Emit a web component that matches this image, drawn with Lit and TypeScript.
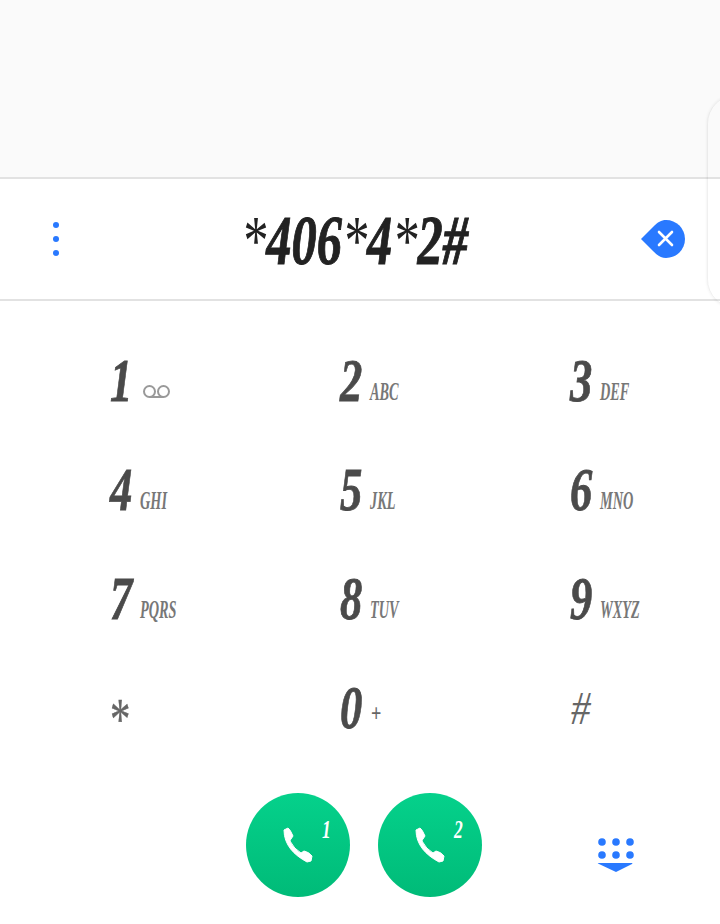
import { LitElement, html, css, svg } from "lit";
import { customElement } from "lit/decorators.js";

const KEYS: [string, string][] = [
  ["1", "vm"], ["2", "ABC"], ["3", "DEF"],
  ["4", "GHI"], ["5", "JKL"], ["6", "MNO"],
  ["7", "PQRS"], ["8", "TUV"], ["9", "WXYZ"],
  ["*", ""], ["0", "+"], ["#", ""],
];

const handset = svg`<path d="M4 5 L8 3 Q10 4 13 11 L11 14 Q10 15 10 16 Q14 24 21 28 L24 26 Q29 27 32 31 L31 36 L27 37 C14 30 4 20 4 5 Z" fill="#fff" stroke="#fff" stroke-width="1" stroke-linejoin="round"/>`;

@customElement("app-root")
export class AppRoot extends LitElement {
  static styles = css`
    :host { display: block; width: 720px; height: 924px; background: #fff; position: relative; overflow: hidden; font-family: "Liberation Serif", serif; }
    .top { height: 177px; background: #fafafa; }
    .display { height: 120px; border-top: 2px solid #e2e2e2; border-bottom: 2px solid #e2e2e2; display: flex; align-items: center; justify-content: space-between; padding: 0 35px 0 53px; background: #fff; }
    .dots { display: flex; flex-direction: column; gap: 8px; }
    .dots i { width: 6px; height: 6px; border-radius: 50%; background: #2979ff; display: block; }
    .number { font-size: 70px; font-weight: 700; font-style: italic; color: #222; -webkit-text-stroke: 1px #222; transform: scaleX(0.72); line-height: 1; white-space: nowrap; position: relative; left: 5px; top: 2px; }
    .number .s { -webkit-text-stroke: 0; font-weight: 400; }
    .del { width: 46px; height: 40px; display: block; }
    .handle { position: absolute; left: 707px; top: 94px; width: 60px; height: 215px; border: 1px solid rgba(0,0,0,.06); border-radius: 30px; box-sizing: border-box; box-shadow: 0 0 3px rgba(0,0,0,.08); }
    .keys { display: grid; grid-template-columns: repeat(3, 230px); grid-auto-rows: 109px; padding: 49px 0 0 110px; }
    .key { display: flex; align-items: baseline; height: 60px; }
    .digit { width: 30px; font-size: 62px; font-weight: 700; font-style: italic; color: #4a4a4a; -webkit-text-stroke: 0.8px #4a4a4a; line-height: 60px; display: inline-block; transform: scaleX(0.72); transform-origin: left; }
    .letters { font-size: 26px; font-style: italic; font-weight: 700; color: #777; display: inline-block; transform: translateY(-1px) scaleX(0.55); transform-origin: left; white-space: nowrap; }
    .plus { font-size: 26px; font-weight: 700; color: #666; display: inline-block; transform: translate(1px, -6px) scaleX(0.7); transform-origin: left; }
    .vm { width: 30px; height: 16px; display: block; align-self: flex-end; margin: 0 0 10px 2px; }
    .star { font-size: 60px; color: #666; font-weight: 400; font-style: normal; -webkit-text-stroke: 0.4px #666; transform: translate(0, 12px) scaleX(0.68); }
    .hash { font-size: 46px; color: #666; font-weight: 400; -webkit-text-stroke: 0; transform: translate(1px, 2px) scaleX(0.85); }
    .actions { display: flex; padding: 0 0 0 246px; gap: 28px; margin-top: 7px; align-items: center; }
    .call { width: 104px; height: 104px; border-radius: 50%; background: linear-gradient(#05d18b, #00bb78); position: relative; display: flex; align-items: center; justify-content: center; }
    .call svg { width: 36px; height: 40px; }
    .sim { position: absolute; left: 74px; top: 24px; color: #fff; font-size: 25px; font-weight: 700; font-style: italic; transform: scaleX(0.7); line-height: 1; }
    .pad { width: 40px; height: 38px; margin-left: 86px; margin-top: 22px; }
  `;

  private key(d: string, l: string) {
    if (d === "*" || d === "#") {
      return html`<div class="key"><span class="digit ${d === "*" ? "star" : "hash"}">${d}</span></div>`;
    }
    return html`<div class="key">
      <span class="digit">${d}</span>
      ${l === "vm"
        ? html`<svg class="vm" viewBox="0 0 30 16"><circle cx="7.5" cy="7.5" r="5.5" fill="none" stroke="#999" stroke-width="2"/><circle cx="21.5" cy="7.5" r="5.5" fill="none" stroke="#999" stroke-width="2"/><path d="M7.5 13h14" stroke="#999" stroke-width="2"/></svg>`
        : l === "+"
        ? html`<span class="plus">+</span>`
        : html`<span class="letters">${l}</span>`}
    </div>`;
  }

  render() {
    return html`
      <div class="top"></div>
      <div class="display">
        <div class="dots"><i></i><i></i><i></i></div>
        <div class="number"><span class="s">*</span>406<span class="s">*</span>4<span class="s">*</span>2#</div>
        <svg class="del" viewBox="0 0 46 40"><path d="M2 20 L14 8 C19 3 22 1 27 1 A19 19 0 0 1 27 39 C22 39 19 37 14 32 Z" fill="#2979ff"/><path d="M20 13 L33 26 M33 13 L20 26" stroke="#fff" stroke-width="2.6" stroke-linecap="round"/></svg>
      </div>
      <div class="handle"></div>
      <div class="keys">${KEYS.map(([d, l]) => this.key(d, l))}</div>
      <div class="actions">
        <div class="call"><svg viewBox="0 0 36 40">${handset}</svg><span class="sim">1</span></div>
        <div class="call"><svg viewBox="0 0 36 40">${handset}</svg><span class="sim">2</span></div>
        <svg class="pad" viewBox="0 0 40 38"><g fill="#2979ff"><circle cx="6" cy="5" r="3.8"/><circle cx="20" cy="5" r="3.8"/><circle cx="34" cy="5" r="3.8"/><circle cx="6" cy="18" r="3.8"/><circle cx="20" cy="18" r="3.8"/><circle cx="34" cy="18" r="3.8"/><path d="M2 26 H36 Q37 26 36 27 L20 35 L3 27 Q1 26 2 26 Z"/></g></svg>
      </div>
    `;
  }
}
